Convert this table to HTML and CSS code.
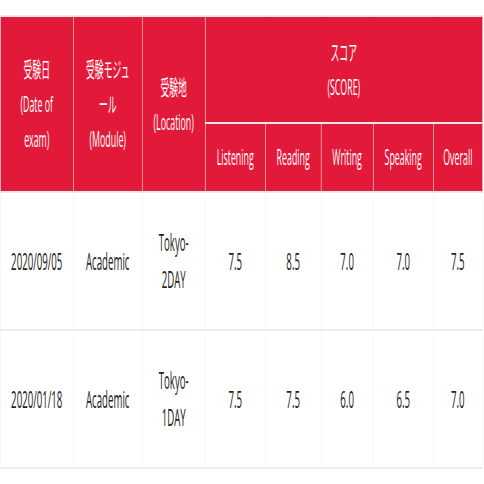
FILE: index.html
```html
<!DOCTYPE html>
<html lang="ja">
<head>
<meta charset="utf-8">
<title>スコア</title>
<link rel="stylesheet" href="styles.css">
</head>
<body>
<div class="wrap">
  <table class="scores">
    <colgroup>
      <col class="c-date">
      <col class="c-module">
      <col class="c-loc">
      <col class="c-l">
      <col class="c-r">
      <col class="c-w">
      <col class="c-s">
      <col class="c-o">
    </colgroup>
    <thead>
      <tr>
        <th rowspan="2">受験日<br>(Date of exam)</th>
        <th rowspan="2">受験モジュール<br>(Module)</th>
        <th rowspan="2">受験地<br>(Location)</th>
        <th colspan="5" class="group">スコア<br>(SCORE)</th>
      </tr>
      <tr class="sub">
        <th>Listening</th>
        <th>Reading</th>
        <th>Writing</th>
        <th>Speaking</th>
        <th>Overall</th>
      </tr>
    </thead>
    <tbody>
      <tr>
        <td>2020/09/05</td>
        <td>Academic</td>
        <td>Tokyo-2DAY</td>
        <td>7.5</td>
        <td>8.5</td>
        <td>7.0</td>
        <td>7.0</td>
        <td>7.5</td>
      </tr>
      <tr>
        <td>2020/01/18</td>
        <td>Academic</td>
        <td>Tokyo-1DAY</td>
        <td>7.5</td>
        <td>7.5</td>
        <td>6.0</td>
        <td>6.5</td>
        <td>7.0</td>
      </tr>
    </tbody>
  </table>
</div>
</body>
</html>
```
FILE: styles.css
```css
html, body {
  margin: 0;
  padding: 0;
  overflow: hidden;
  background: #ffffff;
}

.wrap {
  padding-top: 15px;
  overflow: hidden;
}

.scores {
  width: 1148px;
  table-layout: fixed;
  border-collapse: collapse;
  transform: scaleX(0.42);
  transform-origin: 0 0;
  font-family: "Open Sans", "Noto Sans CJK JP", sans-serif;
  color: #222222;
}

.c-date { width: 174px; }
.c-module { width: 164px; }
.c-loc { width: 150px; }
.c-l { width: 143px; }
.c-r { width: 133px; }
.c-w { width: 124px; }
.c-s { width: 143px; }
.c-o { width: 117px; }

.scores th {
  background: #e3193a;
  color: #ffffff;
  font-weight: 400;
  font-size: 21px;
  line-height: 35px;
  padding: 18px 20px 17px;
  border-style: solid;
  border-color: #e8e8e8;
  border-width: 2px 1px;
  text-align: center;
  vertical-align: middle;
}

.scores .sub th {
  padding: 16px 8px;
}

.scores td {
  font-size: 23px;
  line-height: 37px;
  padding: 31px 20px;
  border-style: solid;
  border-color: #ebebeb;
  border-width: 2px 1px;
  text-align: center;
  vertical-align: middle;
}
```
